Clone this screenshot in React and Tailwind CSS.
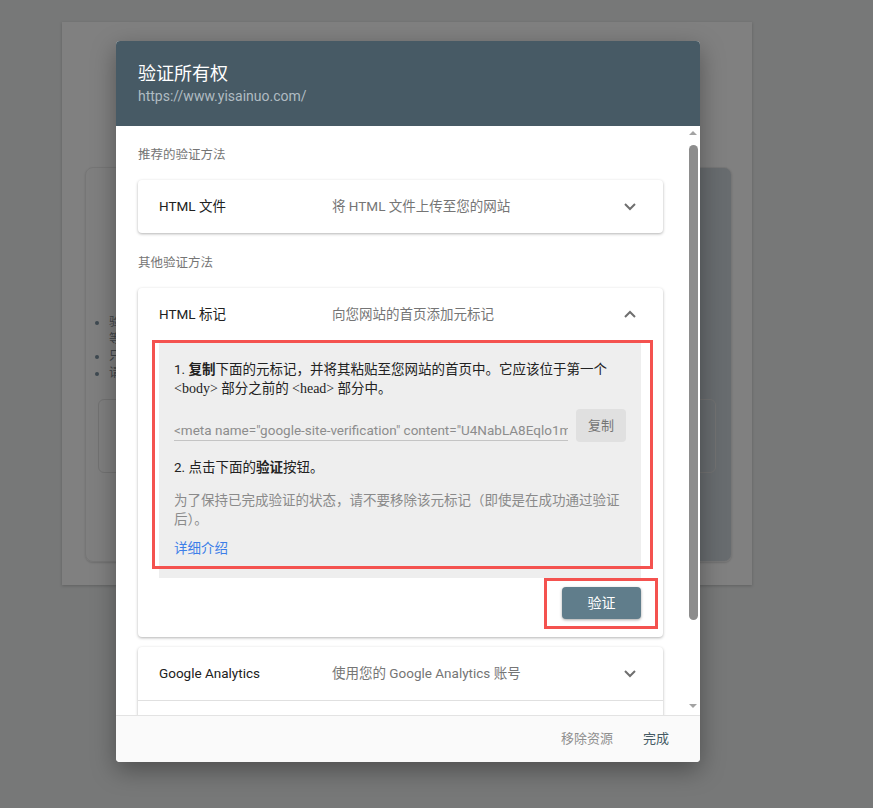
const Chevron = ({ up }) => (
  <svg width="12" height="8" viewBox="0 0 12 8" className="text-[#6f6f6f]">
    <path
      d={up ? "M1 7 L6 2 L11 7" : "M1 1 L6 6 L11 1"}
      fill="none"
      stroke="currentColor"
      strokeWidth="2"
    />
  </svg>
);

const MethodHeader = ({ title, desc, up }) => (
  <div className="h-[53px] flex items-center pl-[21px] pr-[27px] text-[13.5px]">
    <div className="w-[173px] text-[#212121]">{title}</div>
    <div className="flex-1 text-[#757575]">{desc}</div>
    <Chevron up={up} />
  </div>
);

const App = () => {
  return (
    <div className="relative w-[873px] h-[808px] overflow-hidden bg-[#777878] font-['Roboto','Noto_Sans_CJK_SC',sans-serif]">
      {/* page behind the dialog, dimmed */}
      <div className="ml-[62px] mt-[22px] w-[690px] h-[563px] bg-[#808080] shadow-[0_1px_3px_rgba(0,0,0,0.2)] pt-[145px] pl-[23px]">
        <div className="w-[647px] h-[395px] rounded-lg border border-[#767676] shadow-[0_1px_2px_rgba(0,0,0,0.15)] bg-[linear-gradient(90deg,#7f7f7f_85%,#686c6f_85%)] pt-[146px] pl-[12px]">
          <ul className="text-[12px] leading-[17px] text-[#3f4549] pl-[11px] list-disc marker:text-[#3f4a52]">
            <li>
              验证成功后，您将可以查看该资源的数据
              <br />
              等相关信息
            </li>
            <li>只有验证所有权后才能访问数据</li>
            <li>请选择下列任一验证方法</li>
          </ul>
          <div className="mt-[17px] w-[618px] h-[74px] rounded-md border border-[#727272]"></div>
        </div>
      </div>

      {/* dialog */}
      <div className="absolute left-[116px] top-[41px] w-[584px] h-[721px] flex flex-col bg-white rounded-sm overflow-hidden shadow-[0_8px_24px_rgba(0,0,0,0.35)]">
        <div className="h-[85px] shrink-0 bg-[#475a65] pl-[22px] pt-[21px]">
          <div className="text-[18px] leading-[24px] text-white">验证所有权</div>
          <div className="text-[14px] leading-[20px] text-[#b0bcc2]">https://www.yisainuo.com/</div>
        </div>

        <div className="flex-1 min-h-0 flex">
          <div className="flex-1 overflow-hidden pl-[22px] pr-[23px] pt-[21px]">
            <div className="text-[12.5px] leading-[16px] text-[#757575]">推荐的验证方法</div>
            <div className="mt-[17px] bg-white rounded-sm shadow-[0_1px_3px_rgba(0,0,0,0.3)]">
              <MethodHeader title="HTML 文件" desc="将 HTML 文件上传至您的网站" />
            </div>

            <div className="mt-[22px] text-[12.5px] leading-[16px] text-[#757575]">其他验证方法</div>
            <div className="relative mt-[17px] bg-white rounded-sm shadow-[0_1px_3px_rgba(0,0,0,0.3)] pb-[18px]">
              <div className="h-[52px] flex items-center pl-[21px] pr-[27px] text-[13.5px]">
                <div className="w-[173px] text-[#212121]">HTML 标记</div>
                <div className="flex-1 text-[#757575]">向您网站的首页添加元标记</div>
                <Chevron up />
              </div>

              <div className="ml-[21px] mr-[22px] bg-[#eeeeee] px-[15px] pt-[20px] pb-[20px] text-[13.5px] leading-[19px]">
                <p className="text-[#222]">
                  1. <b>复制</b>下面的元标记，并将其粘贴至您网站的首页中。它应该位于第一个
                  <span className="font-['Liberation_Serif',serif] text-[14px]">&lt;body&gt;</span> 部分之前的{" "}
                  <span className="font-['Liberation_Serif',serif] text-[14px]">&lt;head&gt;</span> 部分中。
                </p>
                <div className="mt-[11px] flex items-start">
                  <div className="mt-[11px] w-[395px] h-[21px] leading-[20px] border-b border-[#c4c4c4] text-[#8c8c8c] whitespace-nowrap overflow-hidden">
                    &lt;meta name="google-site-verification" content="U4NabLA8Eqlo1mXk7qz3" /&gt;
                  </div>
                  <button className="ml-[8px] w-[50px] h-[33px] rounded-sm bg-[#e0e0e0] text-[13px] text-[#757575]">
                    复制
                  </button>
                </div>
                <p className="mt-[16px] text-[#222]">
                  2. 点击下面的<b>验证</b>按钮。
                </p>
                <p className="mt-[14px] text-[#8a8a8a]">
                  为了保持已完成验证的状态，请不要移除该元标记（即使是在成功通过验证后）。
                </p>
                <p className="mt-[10px] text-[#3d7ee8]">详细介绍</p>
              </div>

              <div className="mt-[9px] flex justify-end pr-[22px]">
                <button className="w-[79px] h-[32px] rounded-sm bg-[#607d8b] text-white text-[14px] shadow-[0_1px_3px_rgba(0,0,0,0.35)]">
                  验证
                </button>
              </div>

              {/* red annotation boxes */}
              <div className="absolute left-[14px] top-[52px] w-[501px] h-[229px] border-[3px] border-[#f4524f]"></div>
              <div className="absolute left-[406px] top-[290px] w-[114px] h-[51px] border-[3px] border-[#f4524f]"></div>
            </div>

            <div className="mt-[10px] bg-white rounded-t-sm shadow-[0_1px_3px_rgba(0,0,0,0.3)]">
              <div className="border-b border-[#e0e0e0]">
                <MethodHeader title="Google Analytics" desc="使用您的 Google Analytics 账号" />
              </div>
              <MethodHeader title="Google 跟踪代码管理器" desc="使用您的 Google 跟踪代码管理器账号" />
            </div>
          </div>

          {/* scrollbar */}
          <div className="w-[14px] shrink-0 flex flex-col items-center pt-[5px] pb-[7px] bg-white">
            <div className="w-0 h-0 border-x-[4px] border-x-transparent border-b-[4px] border-b-[#a3a3a3]"></div>
            <div className="mt-[10px] w-[9px] h-[475px] rounded-full bg-[#8d8d8d]"></div>
            <div className="flex-1"></div>
            <div className="w-0 h-0 border-x-[4px] border-x-transparent border-t-[4px] border-t-[#a3a3a3]"></div>
          </div>
        </div>

        <div className="h-[47px] shrink-0 bg-[#fafafa] border-t border-[#e3e3e3] flex items-center justify-end gap-[30px] pr-[31px] text-[13px]">
          <span className="text-[#8f8f8f]">移除资源</span>
          <span className="text-[#455a64]">完成</span>
        </div>
      </div>
    </div>
  );
};

export default App;
